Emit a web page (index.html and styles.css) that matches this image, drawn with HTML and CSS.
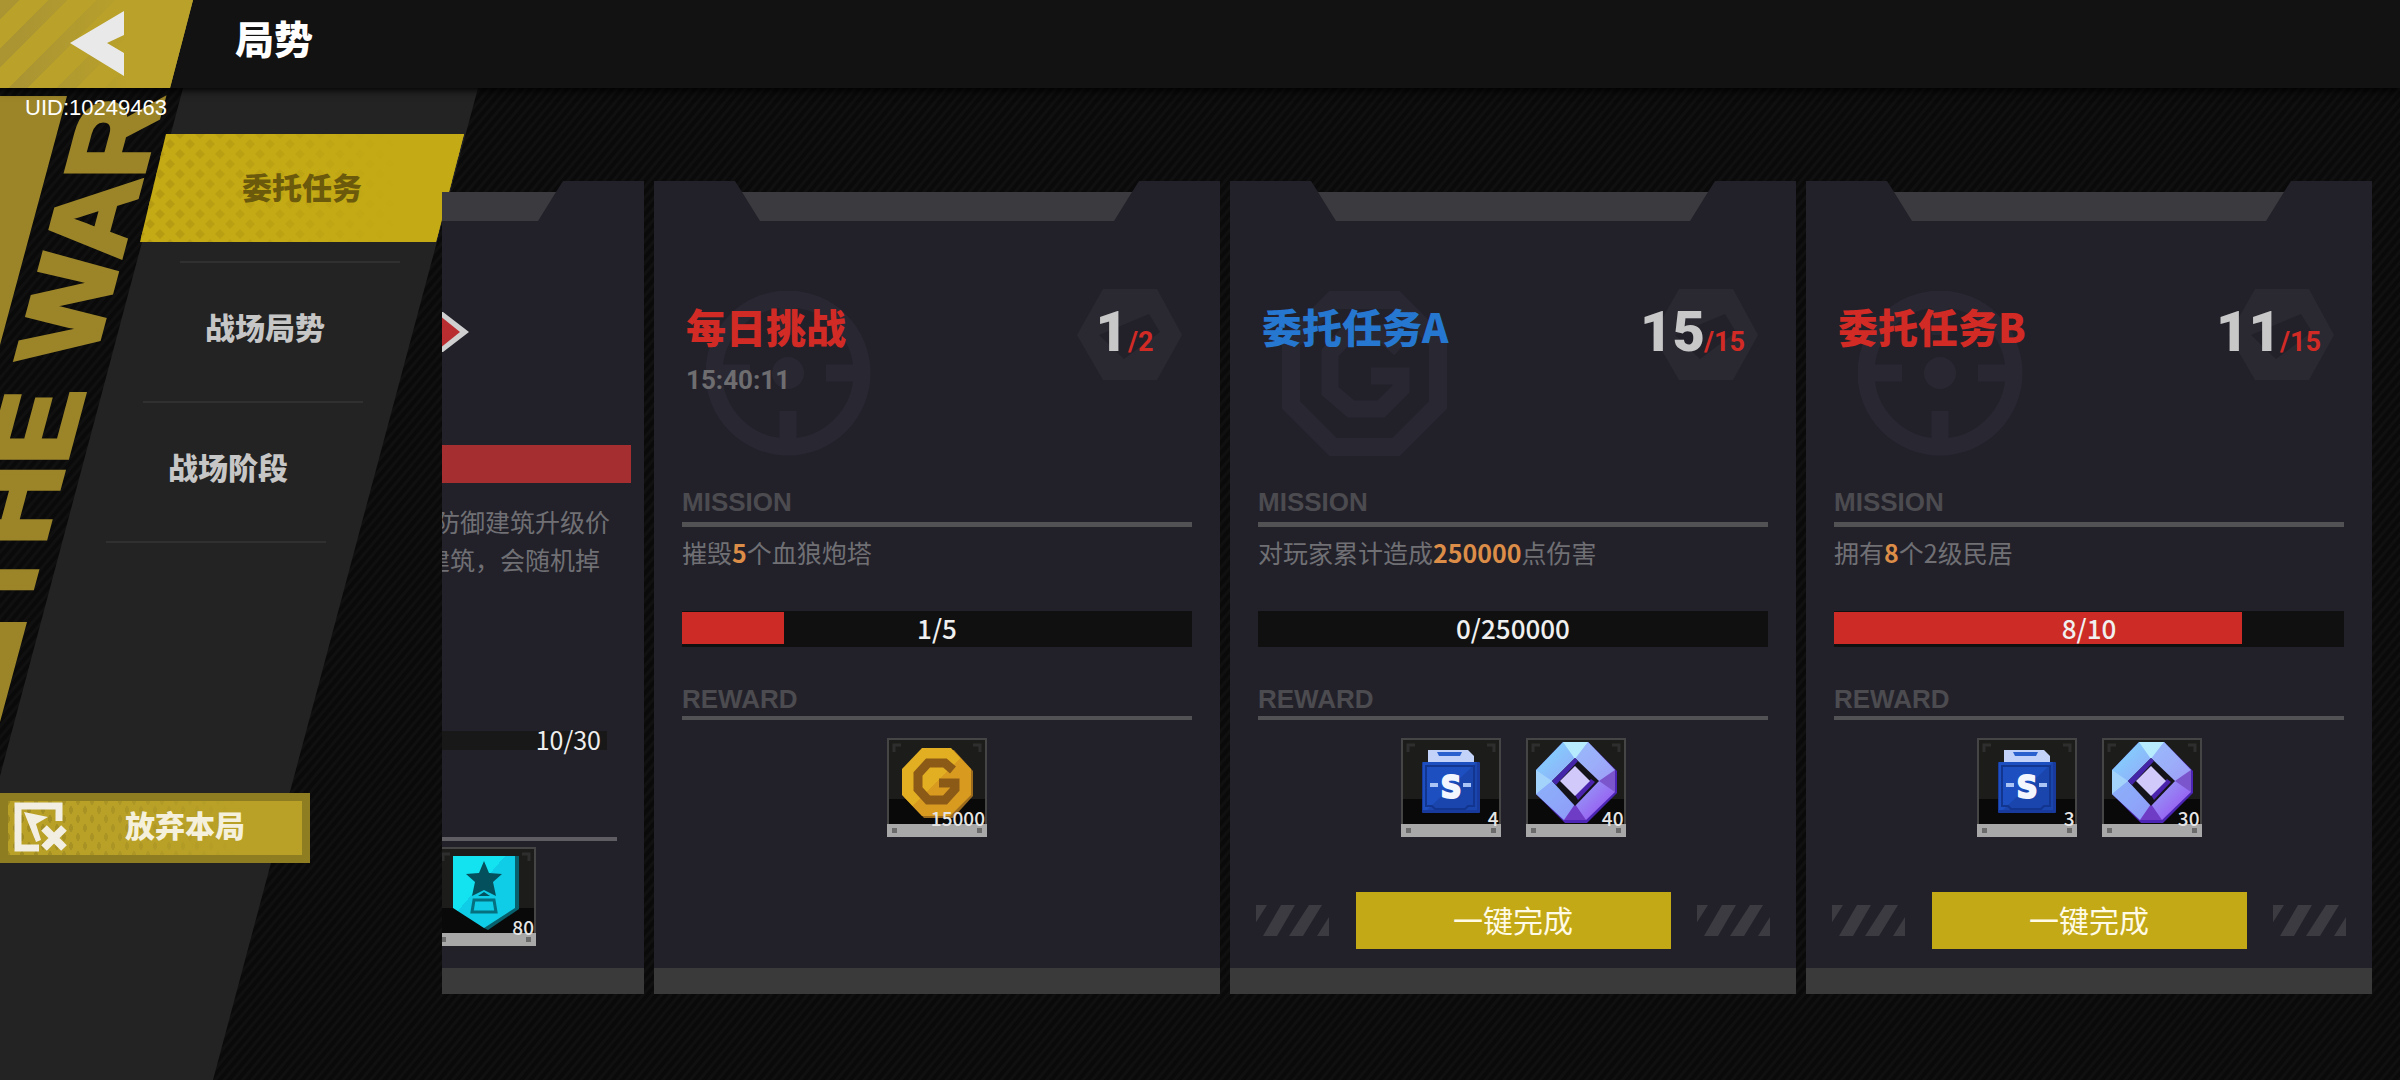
FILE: index.html
```html
<!DOCTYPE html>
<html lang="zh-CN">
	<head>
		<meta charset="UTF-8" />
		<meta name="viewport" content="width=device-width, initial-scale=1.0" />
		<title>局势</title>
		<link rel="stylesheet" href="styles.css">
	</head>
	<body>
		<!-- Shared icons -->
		<svg class="sprite" aria-hidden="true">
			<defs>
				<linearGradient id="gem-fill" x1="0" y1="0" x2="1" y2="1">
					<stop offset="0" stop-color="#7fdcff" />
					<stop offset="0.5" stop-color="#93a6f8" />
					<stop offset="1" stop-color="#9a45ee" />
				</linearGradient>
				<linearGradient id="coin-fill" x1="0" y1="0" x2="1" y2="1">
					<stop offset="0.5" stop-color="#e2ae22" />
					<stop offset="0.5" stop-color="#d89b20" />
				</linearGradient>
				<linearGradient id="medal-fill" x1="0" y1="0" x2="1" y2="1">
					<stop offset="0.42" stop-color="#13e2f0" />
					<stop offset="0.42" stop-color="#0fcde6" />
				</linearGradient>
			</defs>
			<symbol id="tile" viewBox="0 0 100 99">
				<rect width="100" height="99" fill="#454545" />
				<rect x="2" y="2" width="96" height="60" fill="#1c1c1b" />
				<rect x="2" y="61" width="96" height="26" fill="#090909" />
				<path d="M7 14V7h7M86 7h7v7" fill="none" stroke="#2e2e2e" stroke-width="3" />
				<rect y="86" width="100" height="13" fill="#a8a8a8" />
				<path d="M5 90h5v5H5zM90 90h5v5h-5z" fill="#6b6b6b" />
			</symbol>
			<symbol id="coin" viewBox="0 0 100 99">
				<path d="M37 12h30l19 21v25L66 80H37L17 59z" fill="#9c6b1c" />
				<path d="M35 10h29l20 21v26L63 78H35L15 57V31z" fill="url(#coin-fill)" />
				<path d="M66 32 58 25H41L31 36v15l10 11h17l10-11v-6H52" fill="none" stroke="#8b5a16" stroke-width="9" />
			</symbol>
			<symbol id="safe" viewBox="0 0 100 99">
				<path d="M27 12h40l6 6v9H27z" fill="#c3d2f8" />
				<path d="M36 14h25l-2 4H38z" fill="#2b61cf" />
				<rect x="21" y="24" width="58" height="51" rx="1" fill="#173a9c" />
				<rect x="22" y="24" width="54" height="48" fill="#1d4fc0" />
				<path d="M76 24v48H26z" fill="#1a45ad" />
				<path d="M25 68V28h48v40h-6l-3 3H34l-3-3z" fill="none" stroke="#12358f" stroke-width="2" />
				<path d="M29 47h8M62 47h8" stroke="#a9c4f5" stroke-width="4" />
				<text class="safe-letter" x="50" y="60" text-anchor="middle">S</text>
			</symbol>
			<symbol id="gem" viewBox="0 0 100 99">
				<path d="M37 4h25l29 29v22L61 85H39L10 56V32z" fill="#4d25b4" />
				<path d="M37 4h25l27 28v22L60 82H38L10 56V32z" fill="url(#gem-fill)" />
				<path d="M37 4h25L49 21z" fill="#b7ecff" />
				<path d="M10 32v24l16-13z" fill="#a3d3fb" />
				<path d="M10 56l16-13 23 24-11 15z" fill="#8ba8fa" opacity="0.7" />
				<path d="M62 4 49 21l24 22 16-11z" fill="#a2b4fa" opacity="0.6" />
				<path d="M89 32v22L73 43z" fill="#7b55cc" />
				<path d="M38 82h22L49 66z" fill="#6f3cc5" />
				<path d="M49 20l24 23-24 25-23-25z" fill="#15131a" />
				<path d="M49 20 26 43l4 4 22-24z" fill="#4424a8" />
				<path d="M65 41 49 57l3 5 17-18z" fill="#4a22ac" />
				<path d="M49 28l15 15-15 15-15-15z" fill="#d2c9fb" />
			</symbol>
			<symbol id="medal" viewBox="0 0 100 99">
				<path d="M21 9h62v53L52 83l-4-2z" fill="#07606c" />
				<path d="M17 9h62v52L48 81 17 61z" fill="url(#medal-fill)" />
				<path d="M48 14l5 12 13 1-9 8 3 14-12-6-12 6 3-14-9-8 13-1z" fill="#04505c" />
				<path d="M42 49l6-4 6 4z" fill="#04505c" />
				<path d="M38 53h20l2 12H36z" fill="none" stroke="#067080" stroke-width="3" />
			</symbol>
			<symbol id="mark-target" viewBox="0 0 165 165">
				<circle cx="82" cy="82" r="74" fill="none" stroke="currentColor" stroke-width="17" />
				<circle cx="82" cy="82" r="16" fill="currentColor" />
				<path d="M82 16v28M82 120v30M16 82h28M120 82h30" stroke="currentColor" stroke-width="17" />
			</symbol>
			<symbol id="mark-coin" viewBox="0 0 165 165">
				<path d="M51 9h63l42 42v63l-42 42H51L9 114V51z" fill="none" stroke="currentColor" stroke-width="18" />
				<path d="M118 58 100 42H66L48 62v38l21 18h30l20-20V85H89" fill="none" stroke="currentColor" stroke-width="17" />
			</symbol>
			<symbol id="hex" viewBox="0 0 105 91">
				<path fill="currentColor" fill-rule="evenodd" d="M26 0h54l25 46-25 45H26L0 46zM72 25 22 46l25 24 36-27z" />
			</symbol>
			<symbol id="hatch" viewBox="0 0 73 36" preserveAspectRatio="none">
				<path fill="currentColor" d="M0 0h11L0 20zM25 0h14L21 36H7zM53 0h13L47 36H33zM73 14v22H61z" />
			</symbol>
		</svg>

		<header class="topbar">
			<button class="back" type="button" aria-label="返回">
				<svg viewBox="0 0 54 66" width="54" height="66">
					<path d="M54 0v24L37 32l17 10v23L0 32z" fill="#e9e9e9" />
				</svg>
			</button>
			<h1>局势</h1>
		</header>

		<main class="layout">
			<aside class="sidebar">
				<div class="wordmark">THE WAR</div>
				<p class="uid">UID:10249463</p>
				<nav class="tabs">
					<a class="tab active" href="#tasks">委托任务</a>
					<a class="tab" href="#situation">战场局势</a>
					<a class="tab" href="#stage">战场阶段</a>
				</nav>
				<button class="quit" type="button">
					<svg viewBox="0 0 54 52" width="54" height="52">
						<path d="M45 19V4H4v42h21" fill="none" stroke="#f2eee2" stroke-width="7" />
						<path d="M10 10l24 5-12 7 5 16-5 2z" fill="#f2eee2" />
						<path d="M30 26l20 20M50 26 30 46" stroke="#f2eee2" stroke-width="8" />
					</svg>
					<span>放弃本局</span>
				</button>
			</aside>

			<section class="cards" id="tasks">
				<article class="card">
					<div class="notch"></div>
					<div class="card-body intro">
						<svg class="pointer" viewBox="0 0 52 40" width="52" height="40">
							<path d="M0 0h26l26 20-26 20H0z" fill="#d0d0d0" />
							<path d="M0 0h18l25 20-25 20H0z" fill="#b92d31" />
						</svg>
						<div class="banner"></div>
						<p class="intro-text">防御建筑升级价<br>建筑，会随机掉</p>
						<div class="intro-progress">10/30</div>
						<div class="intro-line"></div>
						<div class="reward">
							<svg><use href="#tile" /></svg>
							<svg><use href="#medal" /></svg>
							<span>80</span>
						</div>
					</div>
					<div class="card-foot"></div>
				</article>

				<article class="card">
					<div class="notch"></div>
					<div class="card-body">
						<div class="card-head">
							<svg class="mark"><use href="#mark-target" /></svg>
							<div>
								<h2 class="red">每日挑战</h2>
								<p class="timer">15:40:11</p>
							</div>
							<div class="count">
								<svg><use href="#hex" /></svg>
								<b>1</b><span>/2</span>
							</div>
						</div>
						<h3>MISSION</h3>
						<p class="desc">摧毁<em>5</em>个血狼炮塔</p>
						<div class="progress"><i style="width: 20%"></i><span>1/5</span></div>
						<h3 class="thin">REWARD</h3>
						<div class="rewards">
							<div class="reward">
								<svg><use href="#tile" /></svg>
								<svg><use href="#coin" /></svg>
								<span>15000</span>
							</div>
						</div>
					</div>
					<div class="card-foot"></div>
				</article>

				<article class="card">
					<div class="notch"></div>
					<div class="card-body">
						<div class="card-head">
							<svg class="mark"><use href="#mark-coin" /></svg>
							<h2 class="blue">委托任务A</h2>
							<div class="count">
								<svg><use href="#hex" /></svg>
								<b>15</b><span>/15</span>
							</div>
						</div>
						<h3>MISSION</h3>
						<p class="desc">对玩家累计造成<em>250000</em>点伤害</p>
						<div class="progress"><i style="width: 0%"></i><span>0/250000</span></div>
						<h3 class="thin">REWARD</h3>
						<div class="rewards">
							<div class="reward">
								<svg><use href="#tile" /></svg>
								<svg><use href="#safe" /></svg>
								<span>4</span>
							</div>
							<div class="reward">
								<svg><use href="#tile" /></svg>
								<svg><use href="#gem" /></svg>
								<span>40</span>
							</div>
						</div>
						<div class="actions">
							<svg><use href="#hatch" /></svg>
							<button type="button">一键完成</button>
							<svg><use href="#hatch" /></svg>
						</div>
					</div>
					<div class="card-foot"></div>
				</article>

				<article class="card">
					<div class="notch"></div>
					<div class="card-body">
						<div class="card-head">
							<svg class="mark"><use href="#mark-target" /></svg>
							<h2 class="red">委托任务B</h2>
							<div class="count">
								<svg><use href="#hex" /></svg>
								<b>11</b><span>/15</span>
							</div>
						</div>
						<h3>MISSION</h3>
						<p class="desc">拥有<em>8</em>个2级民居</p>
						<div class="progress"><i style="width: 80%"></i><span>8/10</span></div>
						<h3 class="thin">REWARD</h3>
						<div class="rewards">
							<div class="reward">
								<svg><use href="#tile" /></svg>
								<svg><use href="#safe" /></svg>
								<span>3</span>
							</div>
							<div class="reward">
								<svg><use href="#tile" /></svg>
								<svg><use href="#gem" /></svg>
								<span>30</span>
							</div>
						</div>
						<div class="actions">
							<svg><use href="#hatch" /></svg>
							<button type="button">一键完成</button>
							<svg><use href="#hatch" /></svg>
						</div>
					</div>
					<div class="card-foot"></div>
				</article>
			</section>
		</main>
	</body>
</html>
```
FILE: styles.css
```css
* {
	box-sizing: border-box;
}
body {
	display: flex;
	flex-direction: column;
	min-height: 100vh;
	margin: 0;
	overflow: hidden;
	color: #fff;
	font-family: "Noto Sans CJK SC", sans-serif;
	background: repeating-linear-gradient(
		130deg,
		#0a0a0a 0,
		#0a0a0a 3px,
		#101010 4px,
		#101010 6px,
		#0a0a0a 7px
	);
}
h1,
h2,
h3,
p {
	margin: 0;
}
button {
	padding: 0;
	border: none;
	font-family: inherit;
	cursor: pointer;
}
.sprite {
	position: absolute;
	width: 0;
	height: 0;
}
.safe-letter {
	font: bold 32px "DejaVu Sans Condensed", "DejaVu Sans", sans-serif;
	fill: #f4f6ff;
	stroke: #f4f6ff;
	stroke-width: 2px;
}

/* Top bar */
.topbar {
	display: flex;
	align-items: center;
	gap: 42px;
	height: 88px;
	background: #121212;
	box-shadow: 0 2px 8px #000;
	position: relative;
	z-index: 1;
}
.back {
	display: flex;
	align-items: center;
	width: 193px;
	height: 88px;
	padding-left: 70px;
	background:
		linear-gradient(90deg, rgba(185, 161, 42, 0) 20px, #b9a12a 130px),
		repeating-linear-gradient(135deg, #ab9533 0, #ab9533 14px, #b9a12a 14px, #b9a12a 34px);
	clip-path: polygon(0 0, 100% 0, 170px 100%, 0 100%);
}
.topbar h1 {
	padding-bottom: 14px;
	font-size: 39px;
	font-weight: 900;
	line-height: 48px;
}

/* Sidebar */
.layout {
	display: flex;
	flex: 1;
}
.sidebar {
	position: relative;
	z-index: 0;
	display: flex;
	flex-direction: column;
	align-items: flex-start;
	flex: 0 0 442px;
	min-width: 0;
}
/* yellow blocks behind the lettering */
.sidebar::before {
	content: "";
	position: absolute;
	inset: 8px auto auto 0;
	width: 67px;
	height: 626px;
	background: #9c8529;
	clip-path: polygon(0 0, 67px 0, 0 249px, 0 526px, 27px 526px, 0 626px);
}
/* slanted dark panel */
.sidebar::after {
	content: "";
	position: absolute;
	inset: 0 auto 0 0;
	width: 478px;
	background: #232323;
	clip-path: polygon(183px 0, 478px 0, 213px 100%, 0 100%, 0 688px);
	z-index: -1;
}
.wordmark {
	position: absolute;
	top: 526px;
	left: -69px;
	color: #9c8529;
	font: bold 112px/112px "Liberation Sans", Arial, sans-serif;
	white-space: nowrap;
	-webkit-text-stroke: 5px #9c8529;
	transform: rotate(-90deg) skewY(15deg);
	transform-origin: 0 0;
}
.uid {
	position: relative;
	margin: 8px 0 0 25px;
	font: 22px/24px "Liberation Sans", Arial, sans-serif;
}
.tabs {
	position: relative;
	z-index: 0;
	margin: 14px 0 0 140px;
}
.tab {
	display: block;
	position: relative;
	width: 324px;
	height: 108px;
	margin-bottom: 32px;
	color: #c6c6c6;
	font-size: 30px;
	font-weight: 900;
	line-height: 104px;
	text-align: center;
	text-decoration: none;
}
.tab::after {
	content: "";
	position: absolute;
	top: 127px;
	left: 40px;
	width: 220px;
	height: 2px;
	background: #303030;
}
.tab:nth-child(2) {
	margin-left: -37px;
}
.tab:nth-child(3) {
	margin-left: -74px;
}
.tab.active {
	color: #6c5a0c;
}
.tab.active::before {
	--dot: #b39a12 3px, transparent 4px, transparent calc(100% - 4px), #b39a12 calc(100% - 3px);
	content: "";
	position: absolute;
	inset: 0;
	z-index: -1;
	background:
		linear-gradient(90deg, rgba(196, 170, 20, 0), #c4aa14 80%),
		linear-gradient(45deg, var(--dot)) 0 0 / 20px 20px,
		linear-gradient(-45deg, var(--dot)) 0 0 / 20px 20px,
		linear-gradient(45deg, var(--dot)) 10px 10px / 20px 20px,
		linear-gradient(-45deg, var(--dot)) 10px 10px / 20px 20px,
		#c4aa14;
	clip-path: polygon(26px 0, 100% 0, 296px 100%, 0 100%);
}
.quit {
	position: relative;
	display: flex;
	align-items: center;
	gap: 57px;
	width: 310px;
	height: 70px;
	margin-top: 239px;
	padding-left: 6px;
	border: 8px solid #8f7d22;
	color: #f5f0dc;
	font-size: 30px;
	font-weight: 900;
	background:
		linear-gradient(90deg, rgba(185, 161, 39, 0), #b9a127 80%),
		radial-gradient(ellipse 2px 4px, #a08b22 90%, transparent) 0 0 / 14px 18px,
		radial-gradient(ellipse 2px 4px, #a08b22 90%, transparent) 7px 9px / 14px 18px,
		#b9a127;
}
.quit span {
	padding-bottom: 8px;
	line-height: 40px;
}

/* Cards */
.cards {
	position: relative;
	z-index: 1;
	display: flex;
	flex: 1;
	align-items: stretch;
	align-self: flex-start;
	justify-content: flex-end;
	gap: 10px;
	min-width: 0;
	padding: 93px 28px 0 0;
	overflow: hidden;
}
.card {
	display: flex;
	flex: 0 0 566px;
	flex-direction: column;
	padding-top: 11px;
	background: #22212a;
	clip-path: polygon(
		0 0,
		81px 0,
		88px 11px,
		calc(100% - 88px) 11px,
		calc(100% - 81px) 0,
		100% 0,
		100% 100%,
		0 100%
	);
}
.notch {
	height: 29px;
	margin: 0 88px;
	background: #3b3a3e;
	clip-path: polygon(0 0, 100% 0, calc(100% - 18px) 100%, 18px 100%);
}
.card-body {
	flex: 1;
	padding: 0 28px;
}
.card-foot {
	height: 26px;
	background: #3a3a3a;
}
.card-head {
	position: relative;
	display: flex;
	justify-content: space-between;
	height: 266px;
	padding: 81px 0 0 4px;
}
.mark {
	position: absolute;
	top: 70px;
	left: 24px;
	width: 165px;
	height: 165px;
	color: #292832;
}
.card h2 {
	position: relative;
	font-size: 40px;
	font-weight: 900;
	line-height: 48px;
}
.red {
	color: #d22a25;
}
.blue {
	color: #2677d0;
}
.timer {
	position: relative;
	margin-top: 14px;
	color: #6e6d70;
	font: bold 26px/32px Roboto, sans-serif;
}
.count {
	position: relative;
	display: grid;
	grid-template-columns: 64px 64px;
	align-items: baseline;
	align-self: flex-start;
	font-family: Roboto, sans-serif;
	font-weight: bold;
	line-height: 60px;
}
.count svg {
	position: absolute;
	top: -13px;
	left: 13px;
	width: 105px;
	height: 91px;
	color: #2a2931;
}
.count b {
	position: relative;
	color: #c8c8c8;
	font-size: 56px;
	text-align: right;
}
.count span {
	position: relative;
	color: #d22a25;
	font-size: 27px;
}
.card h3 {
	padding-bottom: 5px;
	border-bottom: 5px solid #525154;
	color: #4c4b4f;
	font: bold 26px/30px "Liberation Sans", Arial, sans-serif;
}
.card h3.thin {
	padding-bottom: 2px;
	border-bottom-width: 4px;
}
.desc {
	margin-top: 6px;
	color: #707074;
	font-size: 25px;
	line-height: 38px;
}
.desc em {
	color: #dc8d48;
	font-style: normal;
	font-weight: 700;
}
.progress {
	position: relative;
	height: 36px;
	margin: 40px 0 37px;
	padding: 1px 0 3px;
	background: #101010;
}
.progress i {
	display: block;
	height: 100%;
	background: #cd2b25;
}
.progress span {
	position: absolute;
	inset: 0;
	color: #f0f0f0;
	font-size: 26px;
	font-weight: 500;
	line-height: 34px;
	text-align: center;
}
.rewards {
	display: flex;
	justify-content: center;
	gap: 25px;
	margin: 18px 0 55px;
}
.reward {
	position: relative;
	width: 100px;
	height: 99px;
}
.reward svg {
	position: absolute;
	inset: 0;
	width: 100%;
	height: 100%;
}
.reward span {
	position: absolute;
	right: 2px;
	bottom: 5px;
	color: #e6e6e6;
	font-size: 19px;
	font-weight: 500;
	line-height: 28px;
}
.actions {
	display: flex;
	align-items: center;
	justify-content: space-between;
	margin: 0 -2px 19px;
}
.actions svg {
	width: 73px;
	height: 31px;
	color: #3c3b41;
}
.actions button {
	width: 315px;
	height: 57px;
	padding-bottom: 3px;
	background: #c4a916;
	color: #fffbe6;
	font-size: 30px;
}

/* Battle intro card */
.intro {
	display: flex;
	flex-direction: column;
	align-items: flex-end;
	padding: 91px 0 0;
}
.pointer {
	margin-right: 175px;
}
.banner {
	width: 100%;
	height: 38px;
	margin-top: 93px;
	border-right: 13px solid #22212a;
	background: #a52e31;
}
.intro-text {
	width: 176px;
	margin: 19px 43px 0 0;
	color: #707074;
	font-size: 25px;
	line-height: 38px;
	text-indent: 10px;
	white-space: nowrap;
}
.intro-text br + * {
	text-indent: 0;
}
.intro-progress {
	width: 400px;
	height: 19px;
	margin: 153px 37px 0 0;
	padding-right: 6px;
	background: #181818;
	color: #eee;
	font-size: 25px;
	line-height: 16px;
	text-align: right;
}
.intro-line {
	width: 400px;
	height: 4px;
	margin: 87px 27px 0 0;
	background: #5f5d62;
}
.intro .reward {
	margin: 6px 108px 0 0;
}
```
